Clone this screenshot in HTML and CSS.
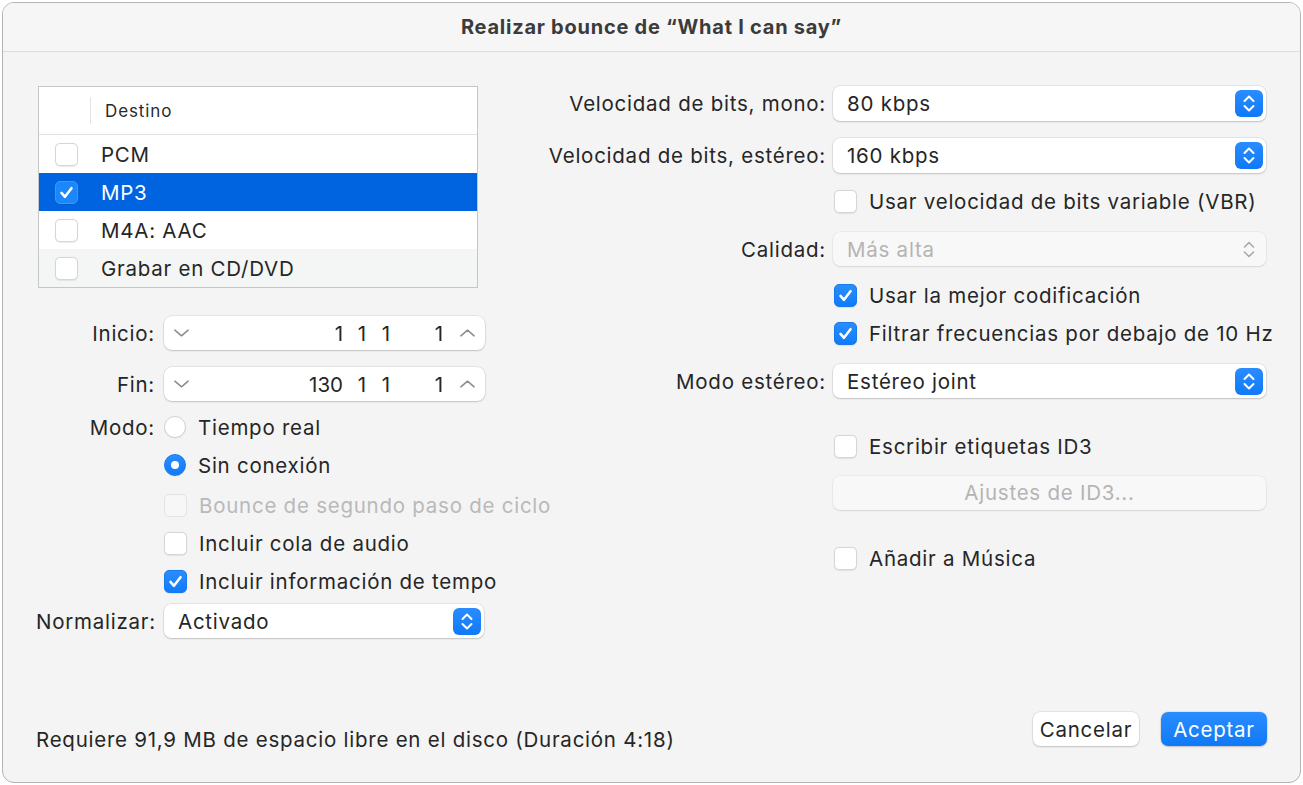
FILE: index.html
```html
<!DOCTYPE html>
<html lang="es">
  <head>
    <meta charset="UTF-8" />
    <meta name="viewport" content="width=device-width, initial-scale=1.0" />
    <title>Realizar bounce</title>
    <link rel="stylesheet" href="styles.css">
  </head>
  <body>
    <div class="window">
      <div class="titlebar">Realizar bounce de “What I can say”</div>
      <div class="content">
        <div class="col-left">
          <div class="table">
            <div class="thead"><span class="divider"></span><span>Destino</span></div>
            <div class="trow"><span class="cb"></span><span>PCM</span></div>
            <div class="trow selected"><span class="cb on"><svg viewBox="0 0 23 23"><path d="M6 12 l3.8 4.2 l7.2-9.4" /></svg></span><span>MP3</span></div>
            <div class="trow"><span class="cb"></span><span>M4A: AAC</span></div>
            <div class="trow alt"><span class="cb"></span><span>Grabar en CD/DVD</span></div>
          </div>

          <div class="frow first">
            <label>Inicio:</label>
            <div class="stepper">
              <span class="step-down"><svg viewBox="0 0 18 10"><path d="M2 2 l7 6 l7-6" /></svg></span>
              <span class="seg s1">1</span><span class="seg s2">1</span><span class="seg s3">1</span><span class="seg s4">1</span>
              <span class="step-up"><svg viewBox="0 0 18 10"><path d="M2 8 l7-6 l7 6" /></svg></span>
            </div>
          </div>
          <div class="frow">
            <label>Fin:</label>
            <div class="stepper">
              <span class="step-down"><svg viewBox="0 0 18 10"><path d="M2 2 l7 6 l7-6" /></svg></span>
              <span class="seg s1">130</span><span class="seg s2">1</span><span class="seg s3">1</span><span class="seg s4">1</span>
              <span class="step-up"><svg viewBox="0 0 18 10"><path d="M2 8 l7-6 l7 6" /></svg></span>
            </div>
          </div>

          <div class="opts">
            <div class="orow">
              <label>Modo:</label>
              <div class="opt"><span class="radio"></span><span>Tiempo real</span></div>
            </div>
            <div class="orow">
              <label></label>
              <div class="opt"><span class="radio on"></span><span>Sin conexión</span></div>
            </div>
            <div class="orow gap2">
              <label></label>
              <div class="opt disabled"><span class="cb"></span><span>Bounce de segundo paso de ciclo</span></div>
            </div>
            <div class="orow">
              <label></label>
              <div class="opt"><span class="cb"></span><span>Incluir cola de audio</span></div>
            </div>
            <div class="orow">
              <label></label>
              <div class="opt"><span class="cb on"><svg viewBox="0 0 23 23"><path d="M6 12 l3.8 4.2 l7.2-9.4" /></svg></span><span>Incluir información de tempo</span></div>
            </div>
          </div>

          <div class="frow norm">
            <label>Normalizar:</label>
            <div class="popup">
              <span class="pval">Activado</span>
              <span class="pbtn"><svg viewBox="0 0 28 27"><path d="M9.5 11 l4.5-4.5 l4.5 4.5 M9.5 16 l4.5 4.5 l4.5-4.5" /></svg></span>
            </div>
          </div>
        </div>

        <div class="col-right">
          <div class="rrow tall" style="margin-top: 0">
            <label>Velocidad de bits, mono:</label>
            <div class="popup"><span class="pval">80 kbps</span><span class="pbtn"><svg viewBox="0 0 28 27"><path d="M9.5 11 l4.5-4.5 l4.5 4.5 M9.5 16 l4.5 4.5 l4.5-4.5" /></svg></span></div>
          </div>
          <div class="rrow tall" style="margin-top: 17px">
            <label>Velocidad de bits, estéreo:</label>
            <div class="popup"><span class="pval">160 kbps</span><span class="pbtn"><svg viewBox="0 0 28 27"><path d="M9.5 11 l4.5-4.5 l4.5 4.5 M9.5 16 l4.5 4.5 l4.5-4.5" /></svg></span></div>
          </div>
          <div class="rrow check" style="margin-top: 13px">
            <label></label>
            <div class="opt"><span class="cb"></span><span>Usar velocidad de bits variable (VBR)</span></div>
          </div>
          <div class="rrow" style="margin-top: 16px">
            <label>Calidad:</label>
            <div class="popup disabled"><span class="pval">Más alta</span><span class="pbtn"><svg viewBox="0 0 28 27"><path d="M9.5 11 l4.5-4.5 l4.5 4.5 M9.5 16 l4.5 4.5 l4.5-4.5" /></svg></span></div>
          </div>
          <div class="rrow check" style="margin-top: 14px">
            <label></label>
            <div class="opt"><span class="cb on"><svg viewBox="0 0 23 23"><path d="M6 12 l3.8 4.2 l7.2-9.4" /></svg></span><span>Usar la mejor codificación</span></div>
          </div>
          <div class="rrow check" style="margin-top: 8px">
            <label></label>
            <div class="opt"><span class="cb on"><svg viewBox="0 0 23 23"><path d="M6 12 l3.8 4.2 l7.2-9.4" /></svg></span><span>Filtrar frecuencias por debajo de 10 Hz</span></div>
          </div>
          <div class="rrow" style="margin-top: 16px">
            <label>Modo estéreo:</label>
            <div class="popup"><span class="pval">Estéreo joint</span><span class="pbtn"><svg viewBox="0 0 28 27"><path d="M9.5 11 l4.5-4.5 l4.5 4.5 M9.5 16 l4.5 4.5 l4.5-4.5" /></svg></span></div>
          </div>
          <div class="rrow check" style="margin-top: 33px">
            <label></label>
            <div class="opt"><span class="cb"></span><span>Escribir etiquetas ID3</span></div>
          </div>
          <div class="rrow" style="margin-top: 15px">
            <label></label>
            <div class="btn-disabled">Ajustes de ID3...</div>
          </div>
          <div class="rrow check" style="margin-top: 33px">
            <label></label>
            <div class="opt"><span class="cb"></span><span>Añadir a Música</span></div>
          </div>
        </div>
      </div>

      <div class="footer">
        <div class="info">Requiere 91,9 MB de espacio libre en el disco (Duración 4:18)</div>
        <div class="buttons">
          <button class="btn">Cancelar</button>
          <button class="btn primary">Aceptar</button>
        </div>
      </div>
    </div>
  </body>
</html>
```

FILE: styles.css
```css
* {
  margin: 0;
  padding: 0;
  box-sizing: border-box;
}
body {
  background: #fff;
  font-family: Inter, "Noto Sans", sans-serif;
  font-size: 20.5px;
  letter-spacing: 0.75px;
  color: #262626;
}
.window {
  margin: 2px 0 0 2px;
  width: 1299px;
  height: 781px;
  border: 1px solid #b3b3b3;
  border-radius: 12px;
  background: #f4f4f4;
  display: flex;
  flex-direction: column;
  overflow: hidden;
}
.titlebar {
  height: 49px;
  flex-shrink: 0;
  background: #f6f6f6;
  border-bottom: 1px solid #dddddd;
  text-align: center;
  font-weight: 700;
  font-size: 20px;
  letter-spacing: 0.75px;
  line-height: 48px;
  color: #3b3b3b;
}
.content {
  flex: 1;
  display: flex;
  padding: 34px 34px 0 33px;
}
.col-left {
  width: 452px;
}
.col-right {
  flex: 1;
  margin-left: 15px;
}

/* table */
.table {
  margin-left: 2px;
  width: 440px;
  border: 1px solid #c6c6c6;
  background: #fff;
}
.thead {
  height: 48px;
  display: flex;
  align-items: center;
  border-bottom: 1px solid #e1e1e1;
  font-size: 17px;
  letter-spacing: 0.9px;
  color: #2a2a2a;
}
.thead .divider {
  width: 1px;
  height: 27px;
  background: #e3e3e3;
  margin: 0 14px 0 51px;
}
.trow {
  height: 38px;
  display: flex;
  align-items: center;
  padding-left: 16px;
}
.trow .cb {
  margin-right: 23px;
}
.trow.selected {
  background: #0064e1;
  color: #fff;
}
.trow.alt {
  background: #f4f5f5;
}

/* checkbox + radio */
.cb {
  width: 23px;
  height: 23px;
  flex-shrink: 0;
  border-radius: 5px;
  background: #fff;
  border: 1px solid #d6d6d6;
  box-shadow: 0 0.5px 1px rgba(0, 0, 0, 0.08);
  display: inline-flex;
}
.cb.on {
  background: linear-gradient(#2a8dff, #107bf8);
  border-color: #1579f0;
}
.trow.selected .cb.on {
  background: #1c86fb;
  border-color: #3f95fb;
}
.cb svg {
  width: 21px;
  height: 21px;
  fill: none;
  stroke: #fff;
  stroke-width: 2.8;
  stroke-linecap: round;
  stroke-linejoin: round;
}
.radio {
  width: 22px;
  height: 22px;
  flex-shrink: 0;
  border-radius: 50%;
  background: #fff;
  border: 1px solid #d3d3d3;
  box-shadow: 0 0.5px 1px rgba(0, 0, 0, 0.08);
  display: inline-flex;
  align-items: center;
  justify-content: center;
}
.radio.on {
  background: linear-gradient(#2a8dff, #107bf8);
  border-color: #1579f0;
}
.radio.on::after {
  content: "";
  width: 8px;
  height: 8px;
  border-radius: 50%;
  background: #fff;
}

/* form rows */
.frow {
  display: grid;
  grid-template-columns: 119px 1fr;
  column-gap: 9px;
  align-items: center;
  height: 34px;
  margin-top: 17px;
}
.frow.first {
  margin-top: 28px;
}
.frow.norm {
  margin-top: 4px;
}
.frow label,
.orow label,
.rrow label {
  text-align: right;
  white-space: nowrap;
}
.stepper {
  height: 34px;
  width: 321px;
  background: #fff;
  border-radius: 8px;
  box-shadow: 0 0 0 0.5px rgba(0, 0, 0, 0.12), 0 1px 2px rgba(0, 0, 0, 0.16);
  display: flex;
  align-items: center;
}
.step-down {
  flex: 1;
  padding-left: 9px;
  display: flex;
}
.step-up {
  width: 42px;
  display: flex;
  justify-content: center;
  padding-left: 6px;
}
.stepper svg {
  width: 17px;
  height: 10px;
  fill: none;
  stroke: #8c8c8c;
  stroke-width: 1.6;
  stroke-linecap: round;
  stroke-linejoin: round;
}
.seg {
  text-align: right;
  letter-spacing: 0;
}
.s1 { width: 40px; }
.s2 { width: 23px; }
.s3 { width: 24px; }
.s4 { width: 53px; }

.opts {
  margin-top: 7px;
}
.orow {
  display: grid;
  grid-template-columns: 119px 1fr;
  column-gap: 9px;
  align-items: center;
  height: 38px;
}
.orow.gap2 {
  margin-top: 2px;
}
.opt {
  display: flex;
  align-items: center;
  gap: 12px;
  white-space: nowrap;
}
.opt.disabled {
  color: #b9b9b9;
}
.opt.disabled .cb {
  background: #f7f7f7;
  border-color: #e3e3e3;
  box-shadow: none;
}

/* popups */
.popup {
  height: 34px;
  background: #fff;
  border-radius: 7px;
  box-shadow: 0 0 0 0.5px rgba(0, 0, 0, 0.12), 0 1px 2px rgba(0, 0, 0, 0.16);
  display: flex;
  align-items: center;
  padding: 0 3px 0 14px;
}
.col-left .popup {
  width: 320px;
}
.pval {
  flex: 1;
}
.pbtn {
  width: 28px;
  height: 27px;
  border-radius: 6px;
  background: linear-gradient(#2a8dff, #0f79f7);
  display: flex;
}
.pbtn svg {
  width: 28px;
  height: 27px;
  fill: none;
  stroke: #fff;
  stroke-width: 2;
  stroke-linecap: round;
  stroke-linejoin: round;
}
.popup.disabled {
  background: #f8f8f8;
  box-shadow: 0 0 0 0.5px rgba(0, 0, 0, 0.07), 0 1px 1.5px rgba(0, 0, 0, 0.09);
  color: #b4b4b4;
}
.popup.disabled .pbtn {
  background: none;
}
.popup.disabled .pbtn svg {
  stroke: #a9a9a9;
  stroke-width: 1.6;
}

.rrow {
  display: grid;
  grid-template-columns: 1fr 433px;
  column-gap: 7px;
  align-items: center;
  height: 34px;
}
.rrow.tall {
  height: 35px;
}
.rrow.tall .popup {
  height: 35px;
}
.rrow.check {
  height: 30px;
}
.rrow .opt {
  padding-left: 1px;
}
.btn-disabled {
  height: 34px;
  border-radius: 7px;
  background: #f8f8f8;
  box-shadow: 0 0 0 0.5px rgba(0, 0, 0, 0.07), 0 1px 1.5px rgba(0, 0, 0, 0.09);
  color: #b4b4b4;
  text-align: center;
  line-height: 34px;
}

/* footer */
.footer {
  height: 90px;
  flex-shrink: 0;
  display: flex;
  justify-content: space-between;
  padding: 20px 33px 0 33px;
}
.info {
  padding-top: 15px;
}
.buttons {
  display: flex;
  gap: 22px;
  height: 34px;
}
.btn {
  font-family: inherit;
  font-size: 20.5px;
  letter-spacing: 0.75px;
  width: 106px;
  height: 34px;
  border: none;
  border-radius: 7px;
  background: #fff;
  color: #262626;
  box-shadow: 0 0 0 0.5px rgba(0, 0, 0, 0.12), 0 1px 2px rgba(0, 0, 0, 0.16);
}
.btn.primary {
  background: linear-gradient(#2a8dff, #0f79f7);
  color: #fff;
}
```
